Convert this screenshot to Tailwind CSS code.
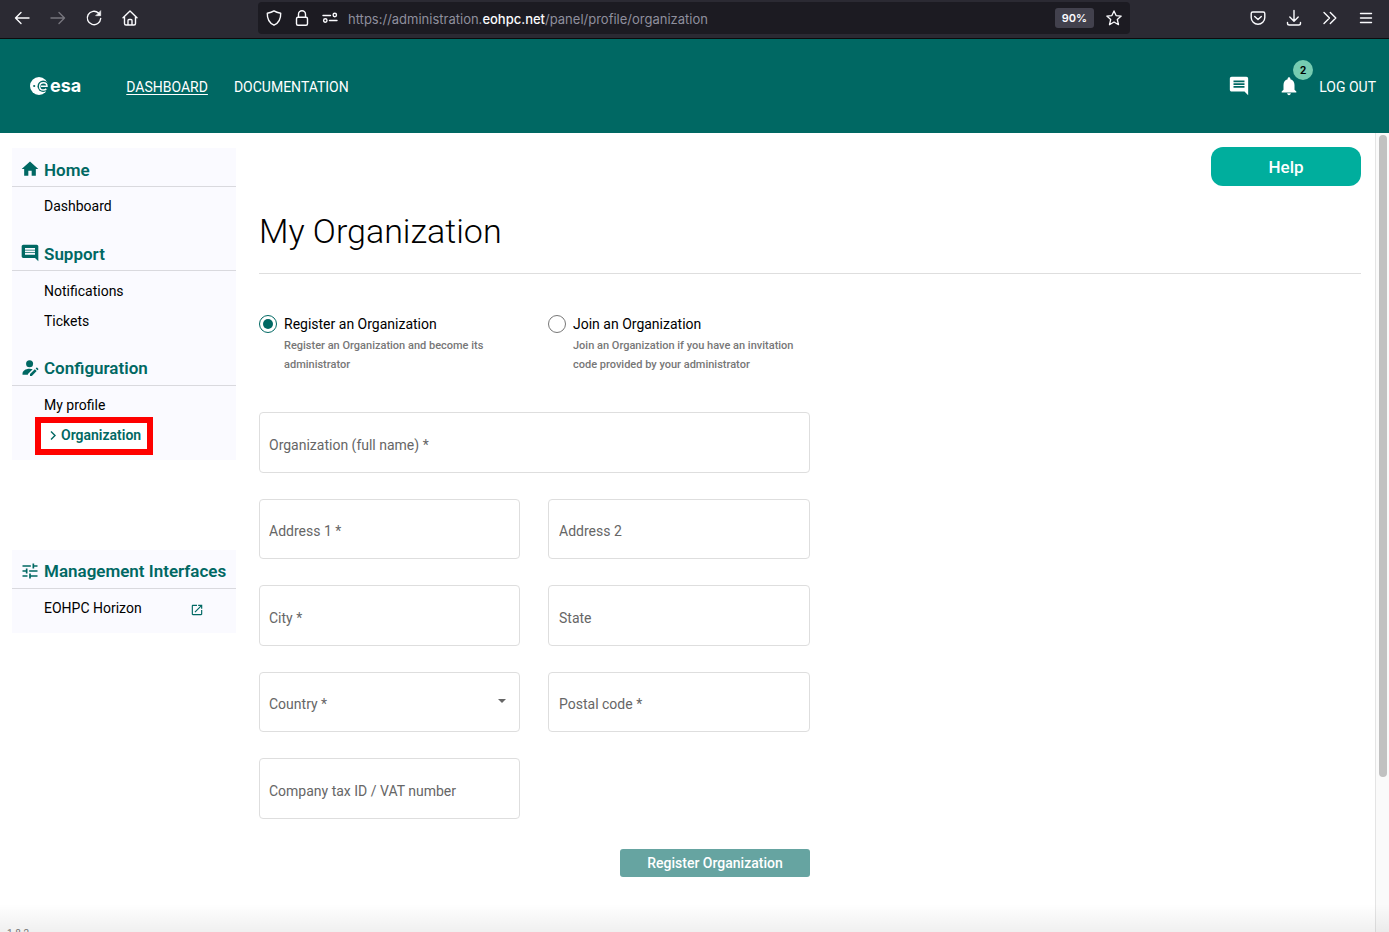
<!DOCTYPE html>
<html lang="en">
<head>
<meta charset="utf-8">
<meta name="viewport" content="width=device-width, initial-scale=1">
<title>My Organization</title>
<script src="https://cdn.jsdelivr.net/npm/@tailwindcss/browser@4"></script>
</head>
<body class="relative flex h-screen flex-col overflow-hidden bg-white font-['Roboto',sans-serif] text-sm text-black">

<!-- Browser toolbar -->
<div class="flex h-[39px] shrink-0 items-start border-b border-[#0c0c0d] bg-[#2b2a33] pt-[2px] pr-[14px] pl-[13px] text-[#fbfbfe]">
  <div class="flex h-8 w-[245px] shrink-0 items-center gap-[18px]">
    <button aria-label="Back"><svg class="size-[18px]" viewBox="0 0 18 18" fill="none" stroke="currentColor" stroke-width="1.4" stroke-linecap="round" stroke-linejoin="round"><path d="M16 9H2.500M8 3.500L2.500 9 8 14.500"/></svg></button>
    <button aria-label="Forward" class="text-[#77767e]"><svg class="size-[18px]" viewBox="0 0 18 18" fill="none" stroke="currentColor" stroke-width="1.4" stroke-linecap="round" stroke-linejoin="round"><path d="M2 9h13.500M10 3.500L15.500 9 10 14.500"/></svg></button>
    <button aria-label="Reload"><svg class="size-[18px]" viewBox="0 0 18 18" fill="none" stroke="currentColor" stroke-width="1.4" stroke-linecap="round"><path d="M15.700 9.500A6.700 6.700 0 1 1 13.500 4"/><path d="M15.700 2v4.700H11z" fill="currentColor" stroke-width=".6" stroke-linejoin="round"/></svg></button>
    <button aria-label="Home"><svg class="size-[18px]" viewBox="0 0 18 18" fill="none" stroke="currentColor" stroke-width="1.4" stroke-linecap="round" stroke-linejoin="round"><path d="M2 8.700L9 2l7 6.700M3.500 7.500v7a1.500 1.500 0 0 0 1.500 1.500h8a1.500 1.500 0 0 0 1.500-1.500v-7M7 16v-4.500a1 1 0 0 1 1-1h2a1 1 0 0 1 1 1V16"/></svg></button>
  </div>
  <div class="flex h-8 w-[872px] min-w-0 items-center rounded bg-[#1c1b22] px-2">
    <svg class="mr-3 size-4 shrink-0" viewBox="0 0 16 16" fill="none" stroke="currentColor" stroke-width="1.4" stroke-linejoin="round"><path d="M8 .9C6 2.300 3.600 2.900 1.300 3.200 1.100 8.500 3 12.800 8 15.200c5-2.400 6.900-6.700 6.700-12C12.400 2.900 10 2.300 8 .9z"/></svg>
    <svg class="mr-3 size-4 shrink-0" viewBox="0 0 16 16" fill="none" stroke="currentColor" stroke-width="1.4"><rect x="2.500" y="7.300" width="11" height="8" rx="1.500"/><path d="M4.500 7.300V4.300a3.500 3.500 0 0 1 7 0v3"/></svg>
    <svg class="mr-[10px] size-4 shrink-0" viewBox="0 0 16 16" fill="none" stroke="currentColor" stroke-width="1.4" stroke-linecap="round"><path d="M1 5.500h7.500M7.500 10.500H15"/><circle cx="12.800" cy="5" r="1.700"/><circle cx="3.300" cy="10.500" r="1.700"/></svg>
    <span class="min-w-0 flex-1 truncate pt-[2px] font-['Inter',sans-serif] text-[13px] text-[#8f8f9d]">https://administration.<b class="font-medium text-[#fbfbfe]">eohpc.net</b>/panel/profile/organization</span>
    <button class="mr-3 h-5 w-[39px] rounded-[3px] bg-[#42414d] pt-px font-['Inter',sans-serif] text-[11px] font-semibold">90%</button>
    <button aria-label="Bookmark"><svg class="size-4" viewBox="0 0 16 16" fill="none" stroke="currentColor" stroke-width="1.3" stroke-linejoin="round"><path d="M8 .9l2.100 4.700 5.100.5-3.900 3.400 1.200 5.200L8 12l-4.500 2.700 1.200-5.200L.8 6.100l5.100-.5z"/></svg></button>
  </div>
  <div class="ml-auto flex h-8 items-center gap-[18px]">
    <button aria-label="Pocket"><svg class="size-[18px]" viewBox="0 0 18 18" fill="none" stroke="currentColor" stroke-width="1.4" stroke-linecap="round" stroke-linejoin="round"><path d="M3.800 3h10.400c.9 0 1.600.6 1.600 1.400v4a6.800 6.800 0 0 1-13.600 0v-4C2.200 3.600 2.900 3 3.800 3z"/><path d="M5.700 7.400L9 10.500l3.300-3.100"/></svg></button>
    <button aria-label="Downloads"><svg class="size-[18px]" viewBox="0 0 18 18" fill="none" stroke="currentColor" stroke-width="1.4" stroke-linecap="round" stroke-linejoin="round"><path d="M9 1.500V12M4.800 8L9 12.200 13.200 8M2.500 13.500v.7c0 1 .8 1.800 1.800 1.800h9.400c1 0 1.800-.8 1.800-1.800v-.7"/></svg></button>
    <button aria-label="More tools"><svg class="size-[18px]" viewBox="0 0 18 18" fill="none" stroke="currentColor" stroke-width="1.4" stroke-linecap="round" stroke-linejoin="round"><path d="M3 3.500L8.500 9 3 14.500M9.300 3.500L14.800 9l-5.500 5.500"/></svg></button>
    <button aria-label="Menu"><svg class="size-[18px]" viewBox="0 0 18 18" fill="none" stroke="currentColor" stroke-width="1.4" stroke-linecap="round"><path d="M3.500 4.500h11M3.500 9h11M3.500 13.500h11"/></svg></button>
  </div>
</div>

<!-- Site header -->
<header class="flex h-[94px] shrink-0 items-center bg-[#006863] pr-[13px] pl-[30px] text-white">
  <a href="#" aria-label="esa" class="mr-[45px] flex items-center gap-[2px]">
    <svg class="size-[18px]" viewBox="0 0 18 18"><circle cx="9" cy="9" r="9" fill="#fff"/><circle cx="4.200" cy="9" r="1.100" fill="#006863"/><circle cx="13.200" cy="9.200" r="5.700" fill="#006863"/><path d="M11 9.300h6c0-2.100-1.500-3.500-3.600-3.500-2.200 0-3.700 1.500-3.700 3.600s1.500 3.600 3.700 3.600c1.200 0 2.200-.4 2.900-1.100" fill="none" stroke="#fff" stroke-width="1.500"/></svg>
    <span class="font-['Inter',sans-serif] text-[18px] leading-[18px] font-bold">esa</span>
  </a>
  <nav class="flex gap-[26px] pt-[2px] font-medium">
    <a href="#" class="font-normal underline underline-offset-2">DASHBOARD</a>
    <a href="#" class="font-normal">DOCUMENTATION</a>
  </nav>
  <div class="ml-auto flex items-center">
    <button aria-label="Messages" class="mr-7"><svg class="size-[22px]" viewBox="0 0 24 24" fill="currentColor"><path d="M21.990 4c0-1.100-.89-2-1.990-2H4c-1.100 0-2 .9-2 2v12c0 1.100.9 2 2 2h14l4 4-.01-18zM18 14H6v-2h12v2zm0-3H6V9h12v2zm0-3H6V6h12v2z"/></svg></button>
    <button aria-label="Notifications" class="relative mr-[19px]"><svg class="size-[22px]" viewBox="0 0 24 24" fill="currentColor"><path d="M12 22c1.100 0 2-.9 2-2h-4c0 1.100.89 2 2 2zm6-6v-5c0-3.070-1.640-5.640-4.500-6.320V4c0-.83-.67-1.500-1.500-1.500s-1.500.67-1.500 1.500v.68C7.630 5.360 6 7.920 6 11v5l-2 2v1h16v-1l-2-2z"/></svg><span class="absolute -top-[15px] left-[15px] flex size-5 items-center justify-center rounded-full bg-[#76ccb1] pt-px text-[11px] font-semibold text-black">2</span></button>
    <a href="#" class="pt-[2px]">LOG OUT</a>
  </div>
</header>

<div class="flex min-h-0 flex-1">
  <!-- Sidebar -->
  <aside class="mt-[15px] ml-3 w-56 shrink-0">
    <nav class="bg-[#fafaff]">
      <h2 class="flex h-[39px] items-center gap-1 border-b border-[#d9d9de] pt-1 pl-2 text-[17px] font-semibold text-[#006863]"><svg class="size-5" viewBox="0 0 24 24" fill="currentColor"><path d="M10 20v-6h4v6h5v-8h3L12 3 2 12h3v8z"/></svg><span class="pt-[2px]">Home</span></h2>
      <ul class="pt-1 pb-[11px] pl-8 leading-[30px]"><li><a href="#">Dashboard</a></li></ul>
      <h2 class="flex h-[39px] items-center gap-1 border-b border-[#d9d9de] pt-1 pl-2 text-[17px] font-semibold text-[#006863]"><svg class="size-5" viewBox="0 0 24 24" fill="currentColor"><path d="M21.990 4c0-1.100-.89-2-1.990-2H4c-1.100 0-2 .9-2 2v12c0 1.100.9 2 2 2h14l4 4-.01-18zM18 14H6v-2h12v2zm0-3H6V9h12v2zm0-3H6V6h12v2z"/></svg><span class="pt-[2px]">Support</span></h2>
      <ul class="pt-[5px] pb-[11px] pl-8 leading-[30px]"><li><a href="#">Notifications</a></li><li><a href="#">Tickets</a></li></ul>
      <h2 class="flex h-[39px] items-center gap-1 border-b border-[#d9d9de] pt-1 pl-2 text-[17px] font-semibold text-[#006863]"><svg class="size-5" viewBox="0 0 24 24" fill="currentColor"><circle cx="11.500" cy="7" r="4.200"/><path d="M3 19c0-3.300 3.600-6 8.500-6 1.400 0 2.600.2 3.700.6L9.500 19.300V20H3zM12 21.500v-2.200l5.800-5.800 2.200 2.200-5.800 5.800zM18.800 12.500l.9-.9c.3-.3.700-.3 1 0l1.200 1.200c.3.300.3.700 0 1l-.9.9z"/></svg>Configuration</h2>
      <ul class="pt-1 pb-[10px] pl-8 leading-[30px]">
        <li><a href="#">My profile</a></li>
        <li class="relative"><span class="absolute -top-[3px] -left-[9px] h-[38px] w-[118px] border-6 border-[#fe0000] bg-white"></span><a href="#" aria-current="page" class="relative flex items-center gap-[2px] pl-[2px] font-semibold text-[#006863]"><svg class="size-[13px]" viewBox="0 0 13 13" fill="none" stroke="currentColor" stroke-width="1.4"><path d="M5 2.500L9 6.500l-4 4"/></svg>Organization</a></li>
      </ul>
    </nav>
    <nav class="mt-[90px] bg-[#fafaff]">
      <h2 class="flex h-[39px] items-center gap-1 border-b border-[#d9d9de] pt-1 pl-2 text-[17px] font-semibold whitespace-nowrap text-[#006863]"><svg class="size-5 shrink-0" viewBox="0 0 24 24" fill="currentColor"><path d="M3 17v2h6v-2H3zM3 5v2h10V5H3zm10 16v-2h8v-2h-8v-2h-2v6h2zM7 9v2H3v2h4v2h2V9H7zm14 4v-2H11v2h10zm-6-4h2V7h4V5h-4V3h-2v6z"/></svg>Management Interfaces</h2>
      <ul class="pt-1 pb-[10px] pl-8 leading-[30px]"><li><a href="#" class="flex items-center justify-between pr-8">EOHPC Horizon<svg class="mt-[3px] size-[14px] text-[#006863]" viewBox="0 0 24 24" fill="currentColor"><path d="M19 19H5V5h7V3H5c-1.110 0-2 .9-2 2v14c0 1.100.89 2 2 2h14c1.100 0 2-.9 2-2v-7h-2v7zM14 3v2h3.590l-9.830 9.830 1.410 1.410L19 6.410V10h2V3h-7z"/></svg></a></li></ul>
    </nav>
  </aside>

  <!-- Content -->
  <main class="ml-[23px] flex min-w-0 flex-1 flex-col pt-[14px] pr-[14px]">
    <button class="h-[39px] w-[150px] self-end rounded-xl bg-[#00ae9d] pt-[2px] text-[17px] font-medium text-white">Help</button>
    <h1 class="mt-[23px] border-b border-[#dedede] pb-5 text-[34px] leading-[44px] font-light">My Organization</h1>
    <form class="mt-[39px] w-full max-w-[551px]">
      <fieldset class="grid grid-cols-[261fr_262fr] gap-x-7">
        <div class="flex gap-[7px]">
          <input type="radio" name="mode" id="mode-register" checked class="mt-[2px] size-[18px] shrink-0 appearance-none rounded-full border border-[#777] bg-clip-content p-[3px] checked:border-[#006863] checked:bg-[#006863]">
          <label for="mode-register" class="leading-[22px]">Register an Organization<span class="block pt-px pr-4 text-[11px] leading-[19px] font-medium text-[#777]">Register an Organization and become its administrator</span></label>
        </div>
        <div class="flex gap-[7px]">
          <input type="radio" name="mode" id="mode-join" class="mt-[2px] size-[18px] shrink-0 appearance-none rounded-full border border-[#777] bg-clip-content p-[3px] checked:border-[#006863] checked:bg-[#006863]">
          <label for="mode-join" class="leading-[22px]">Join an Organization<span class="block pt-px text-[11px] leading-[19px] font-medium text-[#777]">Join an Organization if you have an invitation code provided by your administrator</span></label>
        </div>
      </fieldset>
      <div class="mt-[38px] grid grid-cols-[261fr_262fr] grid-rows-[61px_60px_61px_60px_61px] gap-x-7 gap-y-[26px] text-[#666]">
        <input aria-label="Organization (full name)" placeholder="Organization (full name) *" class="col-span-2 rounded border border-[#dedede] px-[9px] pt-1 placeholder:text-[#666]">
        <input aria-label="Address 1" placeholder="Address 1 *" class="min-w-0 rounded border border-[#dedede] px-[9px] pt-1 placeholder:text-[#666]">
        <input aria-label="Address 2" placeholder="Address 2" class="min-w-0 rounded border border-[#dedede] px-[10px] pt-1 placeholder:text-[#666]">
        <input aria-label="City" placeholder="City *" class="min-w-0 rounded border border-[#dedede] px-[9px] pt-1 placeholder:text-[#666]">
        <input aria-label="State" placeholder="State" class="min-w-0 rounded border border-[#dedede] px-[10px] pt-1 placeholder:text-[#666]">
        <div class="relative">
          <select aria-label="Country" class="size-full appearance-none rounded border border-[#dedede] px-[9px] pt-1"><option>Country *</option></select>
          <svg class="pointer-events-none absolute top-[27px] right-[14px] h-1 w-2" viewBox="0 0 8 4" fill="#666"><path d="M0 0h8L4 4z"/></svg>
        </div>
        <input aria-label="Postal code" placeholder="Postal code *" class="min-w-0 rounded border border-[#dedede] px-[10px] pt-1 placeholder:text-[#666]">
        <input aria-label="Company tax ID / VAT number" placeholder="Company tax ID / VAT number" class="min-w-0 rounded border border-[#dedede] px-[9px] pt-1 placeholder:text-[#666]">
      </div>
      <button type="button" class="mt-[30px] ml-auto block h-7 w-[190px] rounded-[3px] bg-[#66a4a1] font-medium text-white">Register Organization</button>
    </form>
  </main>

  <!-- Scrollbar -->
  <div class="w-[14px] shrink-0 border-l border-[#e4e4e4] bg-[#fafafa] pt-[2px] pl-[3px]"><div class="h-[642px] w-2 rounded-full bg-[#c1c1c1]"></div></div>
</div>

<!-- Footer fade over the bottom edge -->
<footer class="pointer-events-none absolute inset-x-0 bottom-0 h-7 overflow-hidden bg-linear-to-b from-transparent to-black/6"><span class="absolute top-6 left-[7px] text-[10px] leading-3 text-[#777]">1.8.2</span></footer>
</body>
</html>
